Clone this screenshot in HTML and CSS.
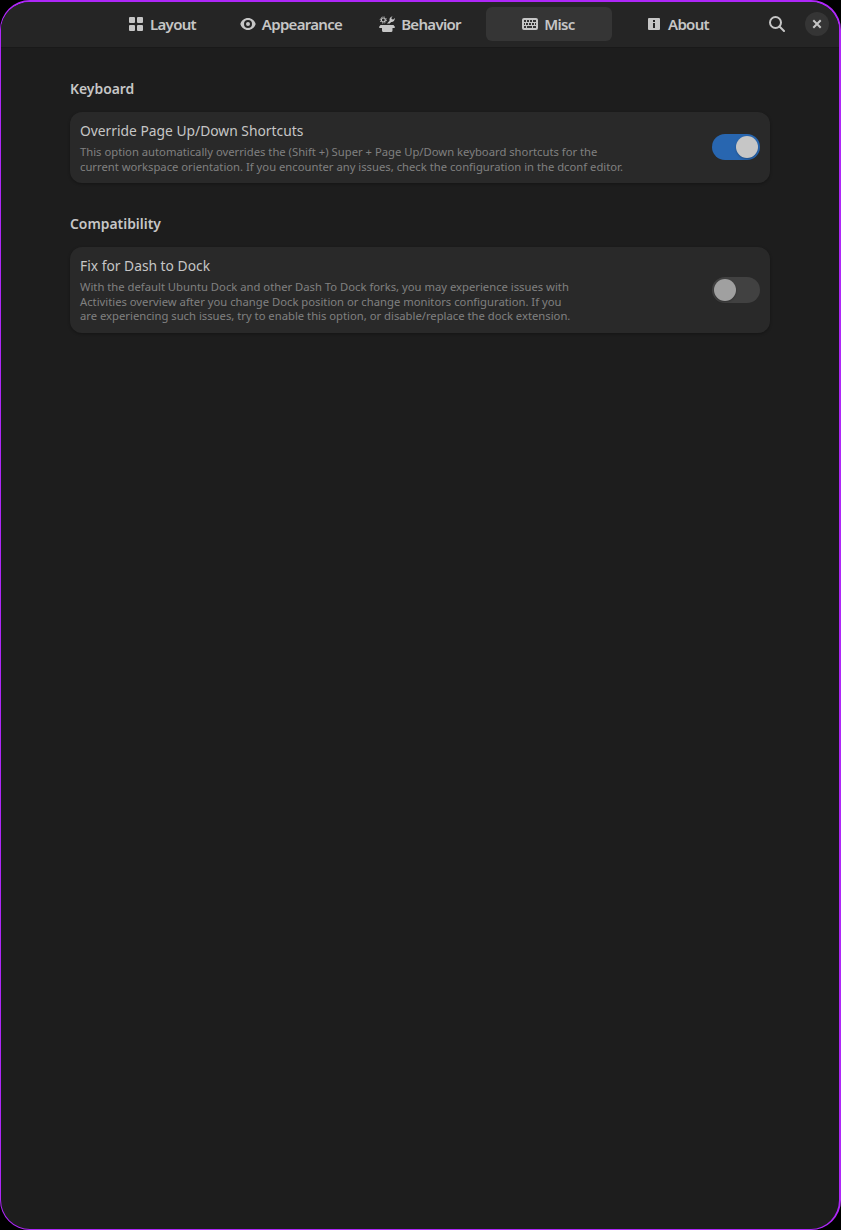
FILE: index.html
```html
<!DOCTYPE html>
<html lang="en">
<head>
<meta charset="utf-8">
<title>Preferences</title>
<link rel="stylesheet" href="styles.css">
</head>
<body>
<div class="window">
  <header class="header">
    <nav class="tabs">
      <a class="tab"><svg class="icon" viewBox="0 0 16 16"><rect x="1" y="1" width="6" height="6" rx="1"/><rect x="9" y="1" width="6" height="6" rx="1"/><rect x="1" y="9" width="6" height="6" rx="1"/><rect x="9" y="9" width="6" height="6" rx="1"/></svg><span class="label">Layout</span></a>
      <a class="tab"><svg class="icon" viewBox="0 0 16 16"><path fill-rule="evenodd" d="M8 2C4.400 2 1.400 4.500 0.300 8C1.400 11.500 4.400 14 8 14S14.600 11.500 15.700 8C14.600 4.500 11.600 2 8 2ZM8 4a4 4 0 1 1 0 8a4 4 0 0 1 0-8ZM8 6a2 2 0 1 0 0 4a2 2 0 0 0 0-4Z"/></svg><span class="label">Appearance</span></a>
      <a class="tab"><svg class="icon" viewBox="0 0 16 16"><circle cx="4.300" cy="4" r="2" fill="none" stroke="currentColor" stroke-width="1.200"/><circle cx="4.300" cy="4" r="3.100" fill="none" stroke="currentColor" stroke-width="1" stroke-dasharray="1.200 1.235"/><path d="M8 7.500L10.600 4.700C10 2.400 11.400.5 13.600.2L12.300 1.900L12.900 3.300L14.300 3.600L15.800 2C16.100 4.400 14.300 6.200 12.200 5.900L10.700 7.500Z"/><path d="M1.500 9H14.500L16 11L15.500 12H13.500V14.500Q13.500 16 12 16H4.500Q3 16 3 14.500V12H.5L0 11Z"/></svg><span class="label">Behavior</span></a>
      <a class="tab active"><svg class="icon" viewBox="0 0 16 16"><path fill-rule="evenodd" d="M2 2H14a2 2 0 0 1 2 2V12a2 2 0 0 1-2 2H2a2 2 0 0 1-2-2V4a2 2 0 0 1 2-2ZM2 4v2h2V4ZM5 4v2h2V4ZM8 4v2h2V4ZM11 4v2h3V4ZM2 7v2h1V7ZM4 7v2h2V7ZM7 7v2h2V7ZM10 7v2h2V7ZM13 7v2h1V7ZM2 10v2h2v-2ZM5 10v2h5v-2ZM11 10v2h3v-2Z"/></svg><span class="label">Misc</span></a>
      <a class="tab short"><svg class="icon" viewBox="0 0 16 16"><path fill-rule="evenodd" d="M3 2H13a1 1 0 0 1 1 1V13a1 1 0 0 1-1 1H3a1 1 0 0 1-1-1V3a1 1 0 0 1 1-1ZM7 4v2h2V4ZM7 7v5h2V7Z"/></svg><span class="label">About</span></a>
    </nav>
    <button class="search" aria-label="Search"><svg class="icon" viewBox="0 0 16 16"><g fill="none" stroke="currentColor" stroke-width="2"><circle cx="6.500" cy="6.500" r="5.500"/><path d="M10.500 10.500L15 15" stroke-linecap="round"/></g></svg></button>
    <button class="close" aria-label="Close"><svg class="icon" viewBox="0 0 16 16"><path d="M5 5L11 11M11 5L5 11" stroke="currentColor" stroke-width="2" stroke-linecap="square"/></svg></button>
  </header>
  <main class="content">
    <section class="group">
      <h2 class="heading">Keyboard</h2>
      <div class="card">
        <div class="text">
          <div class="title">Override Page Up/Down Shortcuts</div>
          <p class="description">This option automatically overrides the (Shift +) Super + Page Up/Down keyboard shortcuts for the<br>current workspace orientation. If you encounter any issues, check the configuration in the dconf editor.</p>
        </div>
        <div class="switch on"><div class="knob"></div></div>
      </div>
    </section>
    <section class="group">
      <h2 class="heading">Compatibility</h2>
      <div class="card">
        <div class="text">
          <div class="title">Fix for Dash to Dock</div>
          <p class="description">With the default Ubuntu Dock and other Dash To Dock forks, you may experience issues with<br>Activities overview after you change Dock position or change monitors configuration. If you<br>are experiencing such issues, try to enable this option, or disable/replace the dock extension.</p>
        </div>
        <div class="switch"><div class="knob"></div></div>
      </div>
    </section>
  </main>
</div>
</body>
</html>
```

FILE: styles.css
```css
* { box-sizing: border-box; }
body { margin: 0; background: #000; font-family: "Noto Sans", sans-serif; color: #c6c6c6; }
.window { height: 1230px; border: solid #ae27f8; border-width: 2px 2px 1px 1px; border-radius: 30px; overflow: hidden; background: #1d1d1d; }
.header { height: 46px; display: flex; align-items: flex-start; padding: 5px 10px 0 98px; background: #252525; border-bottom: 1px solid #191919; }
.tabs { display: flex; gap: 3px; }
.tab { width: 126px; height: 34px; display: flex; align-items: center; justify-content: center; gap: 6px; border-radius: 6px; font-size: 15px; font-weight: 600; letter-spacing: -.7px; }
.label { padding-bottom: 1px; }
.tab.active { background: #353535; }
.tab.active, .tab.short { padding-right: 1px; }
.icon { width: 16px; height: 16px; flex: none; fill: currentColor; display: block; }
button { border: 0; padding: 0; color: inherit; display: grid; place-items: center; }
.search { width: 34px; height: 34px; background: none; margin-left: auto; margin-right: 11px; }
.close { width: 24px; height: 24px; margin-top: 5px; border-radius: 50%; background: #353535; }
.content { padding: 29px 69px; }
.group { margin-bottom: 29px; }
.heading { margin: 0 0 13px; font-size: 15px; line-height: 22px; font-weight: 600; white-space: nowrap; transform: scaleX(.926); transform-origin: left; }
.card { display: flex; justify-content: space-between; align-items: flex-start; width: 700px; padding: 9px 10px; border-radius: 12px; background: #292929; box-shadow: 0 1px 3px rgba(0,0,0,.3); }
.title { font-size: 15px; line-height: 19px; margin-bottom: 5px; white-space: nowrap; transform: scaleX(.921); transform-origin: left; }
.description { margin: 0; font-size: 11.250px; line-height: 14.500px; color: #808080; white-space: nowrap; }
.switch { width: 48px; height: 26px; padding: 2px; border-radius: 13px; background: #414141; display: flex; align-self: center; }
.knob { width: 22px; height: 22px; border-radius: 50%; background: #a0a0a0; box-shadow: 0 1px 2px rgba(0,0,0,.25); }
.on { background: #2866b0; justify-content: flex-end; margin-bottom: 1px; }
.on .knob { background: #c6c6c6; }
```
